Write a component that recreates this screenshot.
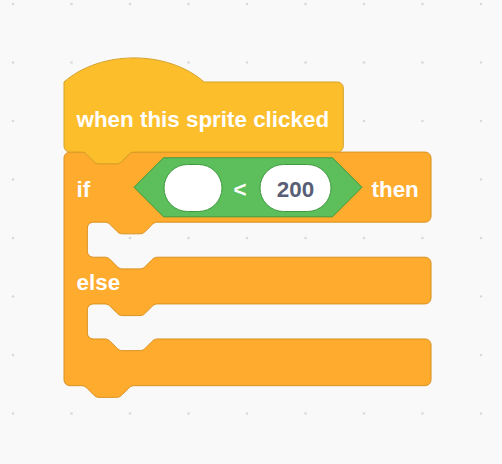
const S = 1.46;

// notch shapes in block units (scratch-blocks geometry)
const NOTCH_R = 'c 2,0 3,1 4,2 l 4,4 c 1,1 2,2 4,2 h 12 c 2,0 3,-1 4,-2 l 4,-4 c 1,-1 2,-2 4,-2';
const NOTCH_L = 'c -2,0 -3,1 -4,2 l -4,4 c -1,1 -2,2 -4,2 h -12 c -2,0 -3,-1 -4,-2 l -4,-4 c -1,-1 -2,-2 -4,-2';

function hatPath(w: number) {
  return [
    'M 0,0 c 25,-22 71,-22 96,0',
    `H ${w - 4} a 4,4 0 0 1 4,4 V 44 a 4,4 0 0 1 -4,4`,
    `H 48 ${NOTCH_L}`,
    'H 4 a 4,4 0 0 1 -4,-4 Z',
  ].join(' ');
}

function ifElsePath(w: number) {
  // right side of an arm, from its top edge down to its bottom edge
  const arm = (bottom: number) => `H ${w - 4} a 4,4 0 0 1 4,4 V ${bottom - 4} a 4,4 0 0 1 -4,4`;
  // empty statement slot between two arms
  const slot = (top: number, bottom: number) =>
    `H 64 ${NOTCH_L} H 20 a 4,4 0 0 0 -4,4 V ${bottom - 4} a 4,4 0 0 0 4,4 H 28 ${NOTCH_R}`;
  return [
    `M 0,4 a 4,4 0 0 1 4,-4 H 12 ${NOTCH_R}`,
    arm(48),
    slot(48, 72),
    arm(104),
    slot(104, 128),
    arm(160),
    `H 48 ${NOTCH_L} H 4 a 4,4 0 0 1 -4,-4 Z`,
  ].join(' ');
}

const font = { fontFamily: '"Liberation Sans", Arial, sans-serif' };

function GridDots() {
  const dots = [];
  for (let i = 0; i < 9; i++) {
    for (let j = 0; j < 8; j++) {
      dots.push(<circle key={`${i}-${j}`} cx={13 + i * 58.5} cy={4 + j * 58.5} r={1.3} fill="#dadada" />);
    }
  }
  return <g>{dots}</g>;
}

export default function App() {
  const ifTop = 82 + 48 * S;
  return (
    <div className="w-[502px] h-[464px] bg-[#f9f9f9] overflow-hidden">
      <svg width="502" height="464" viewBox="0 0 502 464" className="block">
        <GridDots />

        {/* if / else block */}
        <g transform={`translate(64 ${ifTop}) scale(${S})`}>
          <path d={ifElsePath(251.4)} fill="#ffab2e" stroke="#d99222" strokeWidth={1 / S} />
        </g>

        {/* hat block */}
        <g transform={`translate(64 82) scale(${S})`}>
          <path d={hatPath(191.3)} fill="#fcbe2b" stroke="#d6a128" strokeWidth={1 / S} />
        </g>

        {/* boolean operator */}
        <polygon
          points="134,187.3 163.5,157.8 332.5,157.8 362,187.3 332.5,216.8 163.5,216.8"
          fill="#5cbf5c"
          stroke="#3f9a3f"
          strokeWidth={1}
        />
        <rect x="164" y="164.5" width="58" height="47" rx="23.5" fill="#ffffff" stroke="#3f9a3f" strokeWidth={1} />
        <rect x="260" y="164.5" width="71" height="47" rx="23.5" fill="#ffffff" stroke="#3f9a3f" strokeWidth={1} />

        <g style={font} fontWeight="700" fontSize="22.4">
          <text x="76.5" y="126.8" fill="#ffffff">when this sprite clicked</text>
          <text x="76.5" y="196.6" fill="#ffffff">if</text>
          <text x="233.5" y="196.6" fill="#ffffff">&lt;</text>
          <text x="295.5" y="196.6" fill="#575e75" textAnchor="middle">200</text>
          <text x="371.5" y="196.6" fill="#ffffff">then</text>
          <text x="76.5" y="290" fill="#ffffff">else</text>
        </g>
      </svg>
    </div>
  );
}
